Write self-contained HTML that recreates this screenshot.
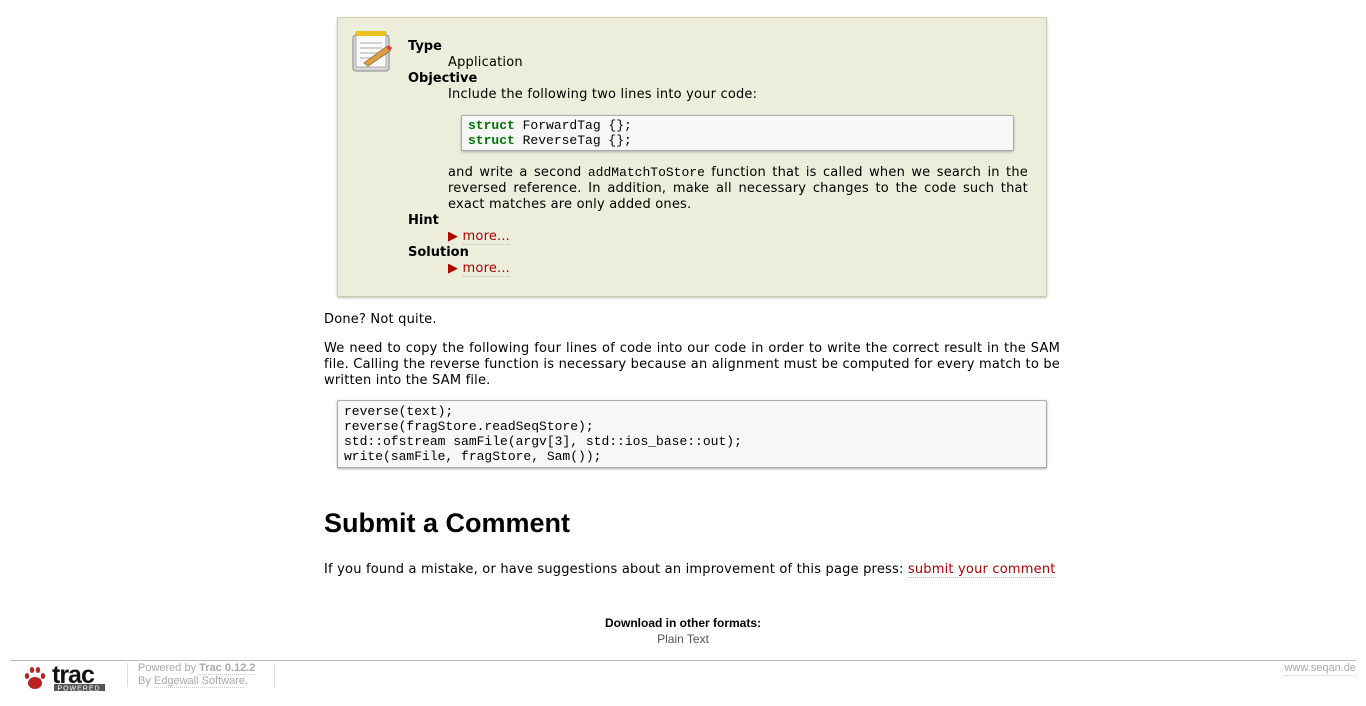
<!DOCTYPE html>
<html><head><meta charset="utf-8"><style>
body{margin:0;background:#fff;font-family:"DejaVu Sans",Verdana,sans-serif;font-size:13px;letter-spacing:0.2px;color:#000;line-height:16px}
.main{position:absolute;left:324px;width:736px;top:1px}
.box{position:absolute;left:13px;top:16px;width:708px;height:278px;background:#ededdb;border:1px solid #cfcfa8;box-shadow:0 1px 2px #bbb;border-radius:2px}
.dt{font-weight:bold;font-size:13px;letter-spacing:0}
a{color:#b00000;text-decoration:none;border-bottom:1px dotted #bbb}
pre{font-family:"Liberation Mono","DejaVu Sans Mono",monospace;font-size:13px;letter-spacing:0;line-height:15px;margin:0}
.k{color:#007500;font-weight:bold}
.code{background:#f7f7f7;border:1px solid #aaa;box-shadow:0 1px 2px #aaa;border-radius:2px}
p{margin:0}
</style></head><body>
<div class="main">
<div class="box">
 <svg style="position:absolute;left:12px;top:11px" width="46" height="46" viewBox="0 0 46 46">
  <rect x="3" y="6" width="36" height="36" rx="3" fill="#d8d8d8" stroke="#888"/>
  <rect x="6" y="4" width="30" height="34" fill="#fafafa" stroke="#aaa"/>
  <rect x="6" y="2" width="30" height="5" fill="#e8c020"/>
  <line x1="10" y1="14" x2="32" y2="14" stroke="#aaa"/><line x1="10" y1="19" x2="32" y2="19" stroke="#aaa"/><line x1="10" y1="24" x2="28" y2="24" stroke="#aaa"/><line x1="10" y1="29" x2="24" y2="29" stroke="#aaa"/>
  <path d="M14 34 L36 18 L40 22 L18 37 Z" fill="#e0a040" stroke="#975"/>
  <path d="M36 18 L40 22 L42 19 L39 16Z" fill="#d44"/>
 </svg>
 <div style="position:absolute;left:70px;top:21px;width:620px">
  <div class="dt">Type</div>
  <div style="padding-left:40px">Application</div>
  <div class="dt">Objective</div>
  <div style="padding-left:40px">Include the following two lines into your code:</div>
  <div class="code" style="margin:12px 14px 0 53px;padding:2px 6px;"><pre><span class="k">struct</span> ForwardTag {};
<span class="k">struct</span> ReverseTag {};</pre></div>
  <div style="padding-left:40px;margin-top:14px;text-align:justify">and write a second <span style="font-family:'Liberation Mono',monospace;letter-spacing:0">addMatchToStore</span> function that is called when we search in the reversed reference. In addition, make all necessary changes to the code such that exact matches are only added ones.</div>
  <div class="dt">Hint</div>
  <div style="padding-left:40px"><span style="color:#b00000">&#9654;</span> <a>more...</a></div>
  <div class="dt">Solution</div>
  <div style="padding-left:40px"><span style="color:#b00000">&#9654;</span> <a>more...</a></div>
 </div>
</div>
<p style="position:absolute;top:311px">Done? Not quite.</p>
<p style="position:absolute;top:340px;width:736px;text-align:justify">We need to copy the following four lines of code into our code in order to write the correct result in the SAM file. Calling the reverse function is necessary because an alignment must be computed for every match to be written into the SAM file.</p>
<div class="code" style="position:absolute;left:13px;top:399px;width:696px;height:60px;padding:3px 6px"><pre>reverse(text);
reverse(fragStore.readSeqStore);
std::ofstream samFile(argv[3], std::ios_base::out);
write(samFile, fragStore, Sam());</pre></div>
<div style="position:absolute;top:505px;font-family:'Liberation Sans',sans-serif;font-weight:bold;font-size:27px;letter-spacing:0;line-height:34px">Submit a Comment</div>
<p style="position:absolute;top:561px;width:736px;white-space:nowrap">If you found a mistake, or have suggestions about an improvement of this page press: <a>submit your comment</a></p>
</div>
<div style="position:absolute;top:615px;width:1366px;text-align:center;font-family:'Liberation Sans',sans-serif;font-size:12px;letter-spacing:0;line-height:16px"><b>Download in other formats:</b><br><span style="color:#555">Plain Text</span></div>
<div style="position:absolute;left:10px;top:660px;width:1346px;border-top:1px solid #bbb"></div>
<svg style="position:absolute;left:24px;top:664px" width="82" height="28" viewBox="0 0 82 28">
 <g fill="#b22"><ellipse cx="11" cy="19" rx="7" ry="6"/><ellipse cx="3" cy="12" rx="2.2" ry="3"/><ellipse cx="8" cy="6" rx="2.2" ry="3"/><ellipse cx="14" cy="6" rx="2.2" ry="3"/><ellipse cx="19" cy="12" rx="2.2" ry="3"/></g>
 <text x="28" y="19" font-family="Liberation Sans,sans-serif" font-weight="bold" font-size="25" fill="#111" letter-spacing="-1">trac</text>
 <rect x="30" y="20" width="51" height="7" fill="#555"/>
 <text x="55" y="26.5" text-anchor="middle" font-family="Liberation Sans,sans-serif" font-size="7" fill="#fff" letter-spacing="1">POWERED</text>
</svg>
<div style="position:absolute;left:127px;top:663px;height:24px;border-left:1px solid #ddd"></div>
<div style="position:absolute;left:138px;top:662px;font-family:'Liberation Sans',sans-serif;font-size:11px;letter-spacing:0;line-height:13px;color:#aaa">Powered by <b style="border-bottom:1px dotted #ccc">Trac 0.12.2</b><br>By <span style="border-bottom:1px dotted #ccc">Edgewall Software</span>.</div>
<div style="position:absolute;left:274px;top:663px;height:24px;border-left:1px solid #ddd"></div>
<div style="position:absolute;right:10px;top:662px;font-family:'Liberation Sans',sans-serif;font-size:11px;letter-spacing:0;color:#aaa;border-bottom:1px dotted #ccc;line-height:13px">www.seqan.de</div>
</body></html>
